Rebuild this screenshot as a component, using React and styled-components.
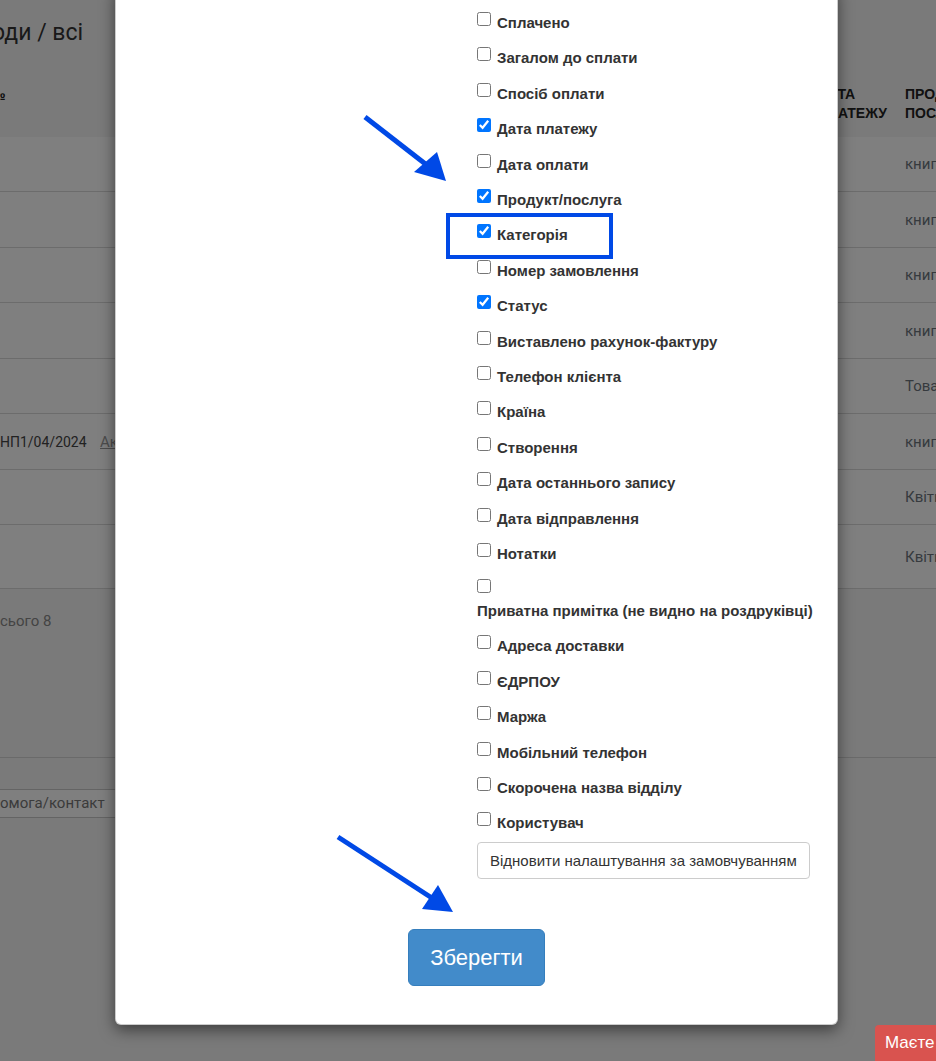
import React from "react";
import styled, { createGlobalStyle } from "styled-components";

const GlobalStyle = createGlobalStyle`
  html, body {
    margin: 0;
    padding: 0;
    overflow: hidden;
  }
  body {
    font-family: "Liberation Sans", Arial, sans-serif;
    color: #333;
    background: #f5f5f5;
  }
`;

const Page = styled.div`
  position: relative;
  width: 936px;
  height: 1061px;
  overflow: hidden;
  background: #f5f5f5;
  font-family: Roboto, "Liberation Sans", sans-serif;
`;

const Title = styled.h1`
  margin: 0 0 0 -8px;
  height: 70px;
  padding-top: 17px;
  box-sizing: border-box;
  font-size: 23px;
  font-weight: 400;
  line-height: 32px;
  color: #333;
`;

const Grid = styled.div`
  display: grid;
  grid-template-columns: 100px 718px 87px minmax(0, 1fr);
  align-items: center;
  white-space: nowrap;
`;

const HeadRow = styled(Grid)`
  height: 67px;
  font-family: "Liberation Sans", Arial, sans-serif;
  font-size: 14px;
  font-weight: 700;
  line-height: 19px;
  color: #222;
  text-transform: uppercase;
`;

const Row = styled(Grid)`
  height: ${(p) => p.$h}px;
  box-sizing: border-box;
  background: #fff;
  border-bottom: 1px solid #d9d9d9;
  font-size: 15px;
  color: #6c757d;
`;

const NumHead = styled.span`
  margin-left: -10px;
  align-self: start;
  margin-top: 16px;
`;

const Doc = styled.span`
  font-size: 14px;
  color: #444;
`;

const DocLink = styled.a`
  color: #999;
  text-decoration: underline;
`;

const Totals = styled.div`
  height: 169px;
  border-bottom: 1px solid #d5d5d5;
  padding-top: 22px;
  box-sizing: border-box;
  font-size: 15px;
  line-height: 20px;
  color: #888;
`;

const FooterBar = styled.div`
  padding-top: 31px;
`;

const HelpButton = styled.span`
  display: inline-block;
  margin-left: -10px;
  padding: 4px 20px 4px 9px;
  border: 1px solid #c8c8c8;
  border-radius: 4px;
  background: #fff;
  font-size: 15px;
  line-height: 19px;
  color: #777;
`;

const Backdrop = styled.div`
  position: absolute;
  inset: 0;
  background: rgba(0, 0, 0, 0.5);
`;

const Modal = styled.div`
  position: absolute;
  top: -14px;
  left: 115px;
  width: 723px;
  box-sizing: border-box;
  background: #fff;
  border: 1px solid rgba(0, 0, 0, 0.2);
  border-radius: 6px;
  box-shadow: 0 5px 15px rgba(0, 0, 0, 0.5);
  font-family: "Liberation Sans", Arial, sans-serif;
`;

const ModalBody = styled.div`
  padding: 23px 14px 0 361px;
`;

const Options = styled.div`
  width: 346px;
`;

const OptionRow = styled.div`
  font-size: 15px;
  line-height: ${(p) => (p.$wrapped ? "21.4px" : "25.4px")};
  padding-top: ${(p) => (p.$wrapped ? "2px" : "0")};
  margin-bottom: ${(p) => (p.$wrapped ? "12px" : "10px")};
`;

const Check = styled.input.attrs({ type: "checkbox" })`
  width: 14px;
  height: 14px;
  margin: 0 6px 0 0;
  vertical-align: 2px;
`;

const OptionLabel = styled.label`
  display: inline-block;
  font-weight: 700;
  color: #333;
`;

const ResetButton = styled.button`
  margin-top: -4px;
  padding: 7px 12px;
  border: 1px solid #ccc;
  border-radius: 4px;
  background: #fff;
  font-family: inherit;
  font-size: 15px;
  line-height: 21px;
  color: #333;
`;

const ModalFooter = styled.div`
  padding: 50px 0 38px;
  text-align: center;
`;

const SaveButton = styled.button`
  padding: 13px 21px;
  border: 1px solid #357ebd;
  border-radius: 6px;
  background: #428bca;
  font-family: inherit;
  font-size: 22px;
  line-height: 29px;
  color: #fff;
`;

const Annotations = styled.svg`
  position: absolute;
  left: 0;
  top: 0;
  pointer-events: none;
`;

const HelpBadge = styled.div`
  position: absolute;
  left: 875px;
  top: 1025px;
  padding: 0 10px;
  height: 40px;
  line-height: 36px;
  border-top-left-radius: 4px;
  background: #d9534f;
  color: #fff;
  font-family: "Liberation Sans", Arial, sans-serif;
  font-size: 17px;
  white-space: nowrap;
`;

const rows = [
  { h: 55, product: "книга" },
  { h: 56, product: "книга" },
  { h: 55, product: "книга" },
  { h: 56, product: "книга" },
  { h: 55, product: "Товар" },
  { h: 56, product: "книга", doc: "НП1/04/2024", link: "Акт" },
  { h: 55, product: "Квіти" },
  { h: 64, product: "Квіти" },
];

const options = [
  ["Сплачено", false],
  ["Загалом до сплати", false],
  ["Спосіб оплати", false],
  ["Дата платежу", true],
  ["Дата оплати", false],
  ["Продукт/послуга", true],
  ["Категорія", true],
  ["Номер замовлення", false],
  ["Статус", true],
  ["Виставлено рахунок-фактуру", false],
  ["Телефон клієнта", false],
  ["Країна", false],
  ["Створення", false],
  ["Дата останнього запису", false],
  ["Дата відправлення", false],
  ["Нотатки", false],
  ["Приватна примітка (не видно на роздруківці)", false, true],
  ["Адреса доставки", false],
  ["ЄДРПОУ", false],
  ["Маржа", false],
  ["Мобільний телефон", false],
  ["Скорочена назва відділу", false],
  ["Користувач", false],
];

const BLUE = "#0049e6";

export default function App() {
  return (
    <Page>
      <GlobalStyle />
      <Title>оди / всі</Title>
      <HeadRow>
        <NumHead>№</NumHead>
        <span />
        <span>
          ДАТА
          <br />
          ПЛАТЕЖУ
        </span>
        <span>
          ПРОДУКТ/
          <br />
          ПОСЛУГА
        </span>
      </HeadRow>
      {rows.map((r, i) => (
        <Row key={i} $h={r.h}>
          <Doc>{r.doc}</Doc>
          <span>{r.link && <DocLink>{r.link}</DocLink>}</span>
          <span />
          <span>{r.product}</span>
        </Row>
      ))}
      <Totals>сього 8</Totals>
      <FooterBar>
        <HelpButton>омога/контакт</HelpButton>
      </FooterBar>

      <Backdrop />

      <Modal>
        <ModalBody>
          <Options>
            {options.map(([label, checked, wrapped], i) => (
              <OptionRow key={i} $wrapped={wrapped}>
                <Check id={`col-${i}`} defaultChecked={checked} />
                <OptionLabel htmlFor={`col-${i}`}>{label}</OptionLabel>
              </OptionRow>
            ))}
            <ResetButton>Відновити налаштування за замовчуванням</ResetButton>
          </Options>
        </ModalBody>
        <ModalFooter>
          <SaveButton>Зберегти</SaveButton>
        </ModalFooter>
      </Modal>

      <Annotations width="936" height="1061" viewBox="0 0 936 1061">
        <line x1="365" y1="117" x2="428" y2="166" stroke={BLUE} strokeWidth="5" />
        <polygon points="446,181 414,172 437,152" fill={BLUE} />
        <rect x="448" y="215" width="163" height="42" fill="none" stroke={BLUE} strokeWidth="4" />
        <line x1="338" y1="837" x2="435" y2="900" stroke={BLUE} strokeWidth="5" />
        <polygon points="453,912 422,909 438,885" fill={BLUE} />
      </Annotations>

      <HelpBadge>Маєте</HelpBadge>
    </Page>
  );
}
